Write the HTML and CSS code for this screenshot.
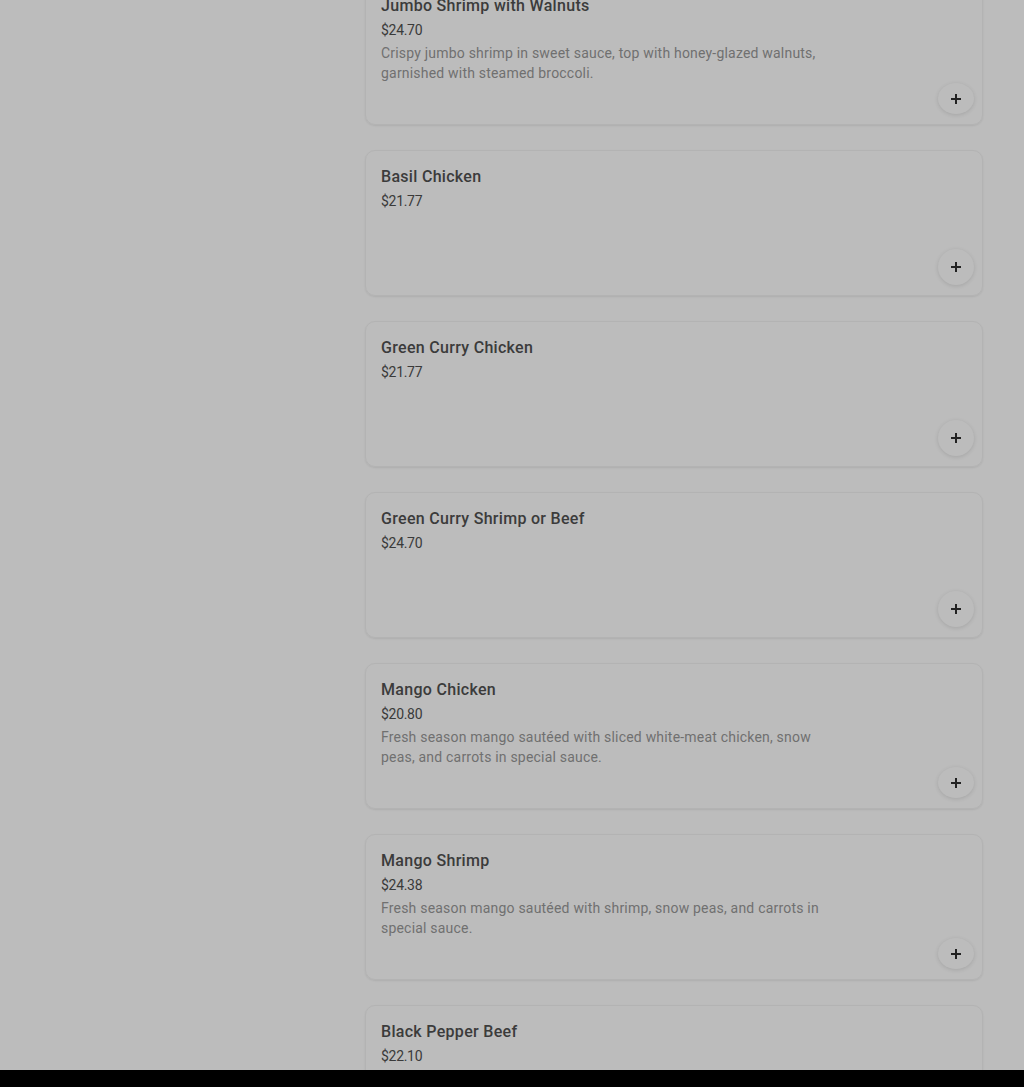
FILE: index.html
```html
<!DOCTYPE html>
<html lang="en">
  <head>
    <meta charset="UTF-8" />
    <meta name="viewport" content="width=device-width, initial-scale=1.0" />
    <title>Menu</title>
    <link rel="stylesheet" href="styles.css">
  </head>
  <body>
    <div class="viewport">
      <div class="menu-list">
        <div class="menu-item">
          <div class="item-name">Jumbo Shrimp with Walnuts</div>
          <div class="item-price">$24.70</div>
          <div class="item-desc">Crispy jumbo shrimp in sweet sauce, top with honey-glazed walnuts, garnished with steamed broccoli.</div>
          <button class="add-button"><svg viewBox="0 0 12 12" width="12" height="12"><path d="M6 1v10M1 6h10" stroke="#222" stroke-width="2"/></svg></button>
        </div>
        <div class="menu-item">
          <div class="item-name">Basil Chicken</div>
          <div class="item-price">$21.77</div>
          <button class="add-button"><svg viewBox="0 0 12 12" width="12" height="12"><path d="M6 1v10M1 6h10" stroke="#222" stroke-width="2"/></svg></button>
        </div>
        <div class="menu-item">
          <div class="item-name">Green Curry Chicken</div>
          <div class="item-price">$21.77</div>
          <button class="add-button"><svg viewBox="0 0 12 12" width="12" height="12"><path d="M6 1v10M1 6h10" stroke="#222" stroke-width="2"/></svg></button>
        </div>
        <div class="menu-item">
          <div class="item-name">Green Curry Shrimp or Beef</div>
          <div class="item-price">$24.70</div>
          <button class="add-button"><svg viewBox="0 0 12 12" width="12" height="12"><path d="M6 1v10M1 6h10" stroke="#222" stroke-width="2"/></svg></button>
        </div>
        <div class="menu-item">
          <div class="item-name">Mango Chicken</div>
          <div class="item-price">$20.80</div>
          <div class="item-desc">Fresh season mango sautéed with sliced white-meat chicken, snow peas, and carrots in special sauce.</div>
          <button class="add-button"><svg viewBox="0 0 12 12" width="12" height="12"><path d="M6 1v10M1 6h10" stroke="#222" stroke-width="2"/></svg></button>
        </div>
        <div class="menu-item">
          <div class="item-name">Mango Shrimp</div>
          <div class="item-price">$24.38</div>
          <div class="item-desc">Fresh season mango sautéed with shrimp, snow peas, and carrots in special sauce.</div>
          <button class="add-button"><svg viewBox="0 0 12 12" width="12" height="12"><path d="M6 1v10M1 6h10" stroke="#222" stroke-width="2"/></svg></button>
        </div>
        <div class="menu-item">
          <div class="item-name">Black Pepper Beef</div>
          <div class="item-price">$22.10</div>
          <button class="add-button"><svg viewBox="0 0 12 12" width="12" height="12"><path d="M6 1v10M1 6h10" stroke="#222" stroke-width="2"/></svg></button>
        </div>
      </div>
    </div>
    <div class="bottom-bar"></div>
  </body>
</html>
```

FILE: styles.css
```css
body {
  font-family: Roboto, "Liberation Sans", sans-serif;
  background-color: #bcbcbc;
  margin: 0;
  padding: 0;
}

.viewport {
  height: 1070px;
  overflow: hidden;
}

.menu-list {
  display: flex;
  flex-direction: column;
  gap: 25px;
  width: 618px;
  margin-left: 365px;
  margin-top: -21px;
}

.menu-item {
  display: flex;
  flex-direction: column;
  box-sizing: border-box;
  height: 146px;
  padding: 14px 8px 10px 15px;
  border: 1px solid #b3b3b3;
  border-radius: 10px;
  box-shadow: 0 1px 2px rgba(0, 0, 0, 0.08);
}

.item-name {
  font-size: 16px;
  font-weight: 500;
  line-height: 24px;
  letter-spacing: 0.3px;
  color: #3b3b3b;
}

.item-price {
  margin-top: 2px;
  font-size: 14px;
  line-height: 20px;
  letter-spacing: -0.3px;
  color: #3a3a3a;
}

.item-desc {
  margin-top: 3px;
  max-width: 460px;
  font-size: 14px;
  line-height: 20px;
  letter-spacing: 0.2px;
  color: #707070;
}

.add-button {
  margin-top: auto;
  align-self: flex-end;
  display: flex;
  align-items: center;
  justify-content: center;
  width: 36px;
  height: 36px;
  padding: 0;
  border: none;
  border-radius: 50%;
  background-color: #bcbcbc;
  box-shadow: 0 1px 4px rgba(0, 0, 0, 0.12);
  cursor: pointer;
}

.bottom-bar {
  height: 17px;
  background-color: #000;
}
```
